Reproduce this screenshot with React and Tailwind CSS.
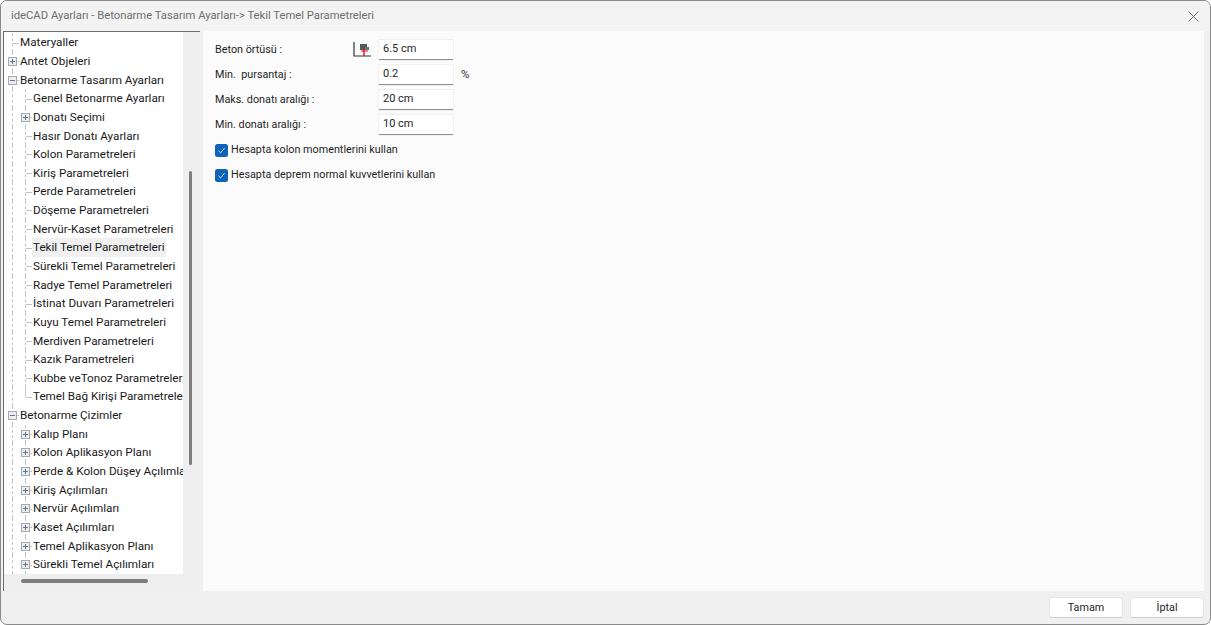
const font = { fontFamily: "Roboto, 'Noto Sans', sans-serif" };

const treeItems = [
  { label: "Materyaller", level: 0, kind: "leaf" },
  { label: "Antet Objeleri", level: 0, kind: "plus" },
  { label: "Betonarme Tasarım Ayarları", level: 0, kind: "minus" },
  { label: "Genel Betonarme Ayarları", level: 1, kind: "leaf" },
  { label: "Donatı Seçimi", level: 1, kind: "plus" },
  { label: "Hasır Donatı Ayarları", level: 1, kind: "leaf" },
  { label: "Kolon Parametreleri", level: 1, kind: "leaf" },
  { label: "Kiriş Parametreleri", level: 1, kind: "leaf" },
  { label: "Perde Parametreleri", level: 1, kind: "leaf" },
  { label: "Döşeme Parametreleri", level: 1, kind: "leaf" },
  { label: "Nervür-Kaset Parametreleri", level: 1, kind: "leaf" },
  { label: "Tekil Temel Parametreleri", level: 1, kind: "leaf", selected: true },
  { label: "Sürekli Temel Parametreleri", level: 1, kind: "leaf" },
  { label: "Radye Temel Parametreleri", level: 1, kind: "leaf" },
  { label: "İstinat Duvarı Parametreleri", level: 1, kind: "leaf" },
  { label: "Kuyu Temel Parametreleri", level: 1, kind: "leaf" },
  { label: "Merdiven Parametreleri", level: 1, kind: "leaf" },
  { label: "Kazık Parametreleri", level: 1, kind: "leaf" },
  { label: "Kubbe veTonoz Parametreleri", level: 1, kind: "leaf" },
  { label: "Temel Bağ Kirişi Parametreleri", level: 1, kind: "last" },
  { label: "Betonarme Çizimler", level: 0, kind: "minus" },
  { label: "Kalıp Planı", level: 1, kind: "plus" },
  { label: "Kolon Aplikasyon Planı", level: 1, kind: "plus" },
  { label: "Perde & Kolon Düşey Açılımları", level: 1, kind: "plus" },
  { label: "Kiriş Açılımları", level: 1, kind: "plus" },
  { label: "Nervür Açılımları", level: 1, kind: "plus" },
  { label: "Kaset Açılımları", level: 1, kind: "plus" },
  { label: "Temel Aplikasyon Planı", level: 1, kind: "plus" },
  { label: "Sürekli Temel Açılımları", level: 1, kind: "plus" },
];

function Connector({ kind }) {
  const isBox = kind === "plus" || kind === "minus";
  return (
    <div className="relative w-[13px] h-full shrink-0">
      <div
        className={`absolute left-[6px] top-0 w-0 border-l border-dashed border-[#c4c4c4] ${
          kind === "last" ? "h-1/2" : "h-full"
        }`}
      />
      <div className="absolute left-[7px] top-1/2 w-[6px] h-0 border-t border-dashed border-[#c4c4c4]" />
      {isBox && (
        <div className="absolute left-[2px] top-[5px] w-[9px] h-[9px] border border-[#a8a8a8] bg-[#eeeeee] flex items-center justify-center">
          <div className="relative w-[5px] h-[5px]">
            <div className="absolute left-0 top-[2px] w-[5px] h-px bg-[#5a74a0]" />
            {kind === "plus" && <div className="absolute left-[2px] top-0 w-px h-[5px] bg-[#5a74a0]" />}
          </div>
        </div>
      )}
    </div>
  );
}

function TreeRow({ item }) {
  return (
    <div className="flex items-stretch h-[18.65px] whitespace-nowrap">
      <div className="w-[2px] shrink-0" />
      {item.level === 1 && (
        <div className="relative w-[13px] shrink-0">
          <div className="absolute left-[6px] top-0 h-full w-0 border-l border-dashed border-[#c4c4c4]" />
        </div>
      )}
      <Connector kind={item.kind} />
      <div
        className={`px-px leading-[18px] text-[11.7px] text-[#1a1a1a] ${
          item.selected ? "bg-[#f0f0f0]" : ""
        }`}
      >
        {item.label}
      </div>
    </div>
  );
}

function FieldRow({ label, value, unit, icon }) {
  return (
    <div className="flex items-center h-[25.2px]">
      <div className="w-[137px] text-[10.8px] text-[#1f1f1f] whitespace-pre">{label}</div>
      <div className="w-[27px] flex justify-start">{icon}</div>
      <div className="w-[74px] h-[20px] bg-white border-b border-[#8f8f8f] shadow-[0_0_0_1px_#f0f0f0] pl-[4px] text-[11px] leading-[18px] text-[#1f1f1f]">
        {value}
      </div>
      {unit && <div className="ml-[8px] text-[11.5px] text-[#333]">{unit}</div>}
    </div>
  );
}

function CheckRow({ label }) {
  return (
    <div className="flex items-center h-[25.2px]">
      <div className="w-[13px] h-[13px] rounded-[2.5px] bg-[#0f63b8] flex items-center justify-center">
        <svg width="9" height="9" viewBox="0 0 9 9" fill="none">
          <path d="M1.5 4.8 L3.6 6.8 L7.5 2.2" stroke="#cfe3f7" strokeWidth="1" />
        </svg>
      </div>
      <div className="ml-[3px] text-[10.8px] text-[#1f1f1f] whitespace-nowrap">{label}</div>
    </div>
  );
}

function CoverIcon() {
  return (
    <svg width="20" height="18" viewBox="0 0 20 18" fill="none">
      <rect x="0" y="0" width="20" height="18" fill="#fafafa" />
      <path d="M2 1 V15 H19" stroke="#333" strokeWidth="1.2" />
      <rect x="8" y="3" width="7" height="6" fill="#3f6464" />
      <rect x="12" y="6" width="5" height="3" fill="#5d7878" />
      <path d="M12 5 V15" stroke="#e01020" strokeWidth="1.4" />
      <path d="M9 10 H16" stroke="#e01020" strokeWidth="1" />
    </svg>
  );
}

function ActionButton({ children }) {
  return (
    <button className="w-[74px] h-[21px] bg-white rounded-[3px] border border-[#e6e6e6] border-b-[#cfcfcf] text-[10.8px] leading-[17px] text-[#1f1f1f]">
      {children}
    </button>
  );
}

export default function App() {
  return (
    <div style={font} className="w-[1211px] h-[625px] bg-white overflow-hidden">
      <div className="w-full h-full flex flex-col rounded-[7px] border border-[#8a8a8a] bg-[#f0f0f0] overflow-hidden">
        <div className="h-[30px] shrink-0 flex items-center justify-between pl-[10px] pr-[11px] bg-[#f3f3f3]">
          <span className="text-[11.25px] text-[#6e6e6e] whitespace-nowrap">
            ideCAD Ayarları - Betonarme Tasarım Ayarları-&gt; Tekil Temel Parametreleri
          </span>
          <svg width="11" height="11" viewBox="0 0 11 11" fill="none">
            <path d="M0.5 0.5 L10.5 10.5 M10.5 0.5 L0.5 10.5" stroke="#6f6f6f" strokeWidth="1" />
          </svg>
        </div>
        <div className="flex-1 flex min-h-0 pl-[2px] pr-[6px]">
          <div className="w-[197px] shrink-0 h-[560px] flex flex-col border-l border-t border-[#6e6e6e] bg-[#eeeeee]">
            <div className="flex flex-1 min-h-0">
              <div className="w-[179px] h-[542px] bg-white overflow-hidden pt-[1.3px]">
                {treeItems.map((item) => (
                  <TreeRow key={item.label} item={item} />
                ))}
              </div>
              <div className="flex-1 pt-[139px] pl-[6px]">
                <div className="w-[3px] h-[294px] rounded-full bg-[#7d7d7d]" />
              </div>
            </div>
            <div className="h-[17px] pl-[17px] pt-[5px]">
              <div className="w-[127px] h-[4px] rounded-full bg-[#7d7d7d]" />
            </div>
          </div>
          <div className="ml-[3px] flex-1 h-[560px] bg-[#fbfbfb] pl-[12px] pt-[6px]">
            <FieldRow label="Beton örtüsü :" value="6.5 cm" icon={<CoverIcon />} />
            <FieldRow label="Min.  pursantaj :" value="0.2" unit="%" />
            <FieldRow label="Maks. donatı aralığı :" value="20 cm" />
            <FieldRow label="Min. donatı aralığı :" value="10 cm" />
            <CheckRow label="Hesapta kolon momentlerini kullan" />
            <CheckRow label="Hesapta deprem normal kuvvetlerini kullan" />
          </div>
        </div>
        <div className="h-[32px] shrink-0 flex items-center justify-end gap-[7px] pr-[6px] pb-[2px]">
          <ActionButton>Tamam</ActionButton>
          <ActionButton>İptal</ActionButton>
        </div>
      </div>
    </div>
  );
}
